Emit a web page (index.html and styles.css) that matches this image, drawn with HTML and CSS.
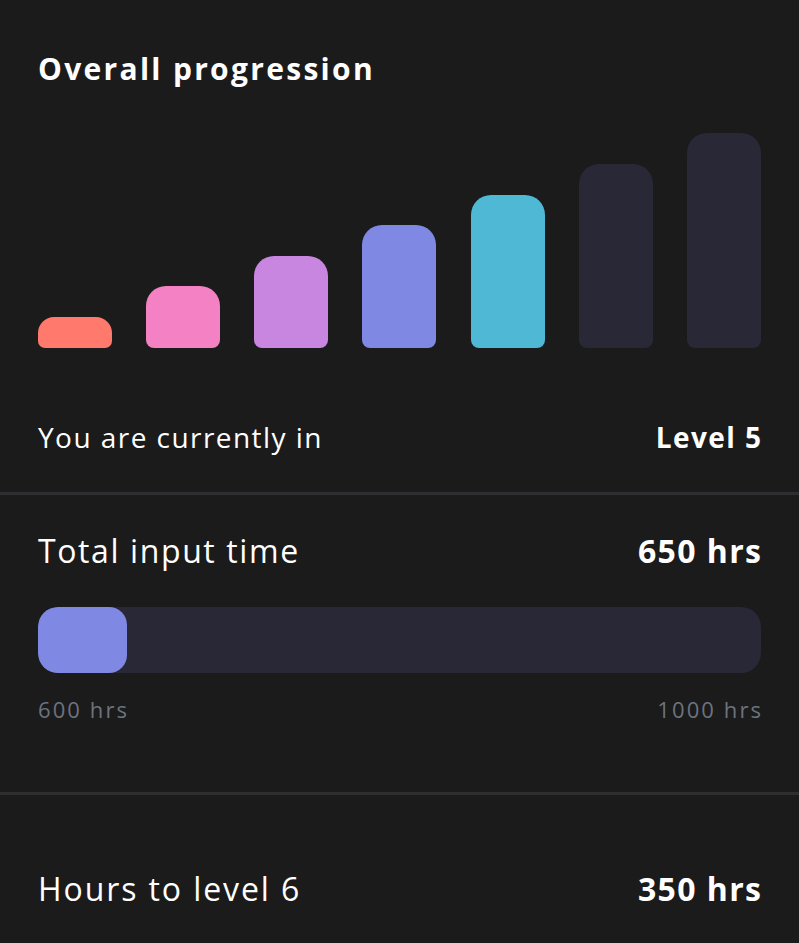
FILE: index.html
```html
<!DOCTYPE html>
<html lang="en">
<head>
<meta charset="utf-8">
<title>Overall progression</title>
<link rel="stylesheet" href="styles.css">
</head>
<body>
<main class="card">
  <h1 class="title">Overall progression</h1>
  <div class="chart">
    <div class="bar bar-1"></div>
    <div class="bar bar-2"></div>
    <div class="bar bar-3"></div>
    <div class="bar bar-4"></div>
    <div class="bar bar-5"></div>
    <div class="bar bar-6"></div>
    <div class="bar bar-7"></div>
  </div>
  <div class="row row-level">
    <span class="label">You are currently in</span>
    <span class="value">Level 5</span>
  </div>
  <hr class="divider divider-1">
  <section class="section-input">
    <div class="row row-big">
      <span class="label">Total input time</span>
      <span class="value">650 hrs</span>
    </div>
    <div class="track"><div class="fill" style="width: 89px"></div></div>
    <div class="row row-range">
      <span>600 hrs</span>
      <span class="value">1000 hrs</span>
    </div>
  </section>
  <hr class="divider divider-2">
  <div class="row row-big row-hours">
    <span class="label">Hours to level 6</span>
    <span class="value">350 hrs</span>
  </div>
</main>
</body>
</html>
```
FILE: styles.css
```css
html, body {
  margin: 0;
  padding: 0;
  background: #1b1b1b;
}
body {
  font-family: "Open Sans", Lato, sans-serif;
  color: #ffffff;
}
.card {
  padding: 51px 38px 40px 38px;
}
.title {
  margin: 0;
  font-size: 30px;
  line-height: 36px;
  font-weight: 700;
  letter-spacing: 2.3px;
}
.chart {
  margin-top: 46px;
  height: 215px;
  display: flex;
  align-items: flex-end;
  justify-content: space-between;
}
.bar {
  width: 74px;
  border-radius: 20px 20px 8px 8px;
}
.bar-1 { height: 31px; background: #ff7a6d; border-radius: 16px 16px 7px 7px; }
.bar-2 { height: 62px; background: #f581c5; }
.bar-3 { height: 92px; background: #c886e1; }
.bar-4 { height: 123px; background: #7f88e3; }
.bar-5 { height: 153px; background: #4fb8d4; }
.bar-6 { height: 184px; background: #292836; }
.bar-7 { height: 215px; background: #292836; }

.row {
  display: flex;
  justify-content: space-between;
  align-items: baseline;
}
.row-level {
  margin-top: 72px;
  font-size: 28px;
  line-height: 34px;
  letter-spacing: 1.45px;
}
.row-level .value { font-weight: 700; margin-right: -1.45px; }
.divider {
  border: 0;
  height: 3px;
  background: #2e2e30;
  margin: 38px -38px 0 -38px;
}
.row-big {
  font-size: 32px;
  line-height: 38px;
  letter-spacing: 1.6px;
}
.row-big .value { font-weight: 700; letter-spacing: 1.4px; margin-right: -1.4px; }
.row-hours .label { letter-spacing: 1.9px; }
.section-input .row-big { margin-top: 37px; }
.track {
  margin-top: 37px;
  height: 66px;
  border-radius: 20px;
  background: #292836;
  overflow: hidden;
}
.fill {
  height: 100%;
  background: #7f88e3;
  border-radius: 18px;
}
.row-range {
  margin-top: 23px;
  font-size: 22px;
  line-height: 26px;
  letter-spacing: 2.1px;
  color: #6b737f;
}
.row-range .value { margin-right: -2.1px; }
.divider-2 { margin-top: 70px; }
.row-hours { margin-top: 75px; }
```
